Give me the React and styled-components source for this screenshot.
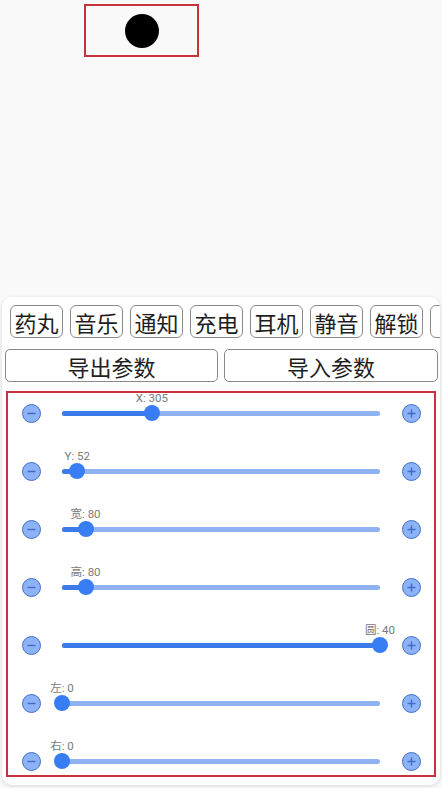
import React from "react";
import styled, { createGlobalStyle } from "styled-components";

const GlobalStyle = createGlobalStyle`
  html, body {
    margin: 0;
    padding: 0;
    background: #f9f9f9;
    font-family: "Noto Sans CJK SC", "Noto Sans", Roboto, sans-serif;
  }
`;

const Page = styled.div`
  height: 788px;
  display: flex;
  flex-direction: column;
  overflow: hidden;
`;

const Preview = styled.div`
  margin: 4px 0 0 84px;
  width: 115px;
  height: 53px;
  box-sizing: border-box;
  border: 2px solid #c8323c;
  display: flex;
  align-items: center;
  justify-content: center;
`;

const Dot = styled.div`
  width: 34px;
  height: 34px;
  border-radius: 50%;
  background: #000;
`;

const Card = styled.div`
  margin: auto 2px 3px 2px;
  height: 488px;
  box-sizing: border-box;
  background: #fff;
  border-radius: 10px;
  box-shadow: 0 1px 4px rgba(0, 0, 0, 0.14);
  padding: 8px 4px 8px 3px;
  display: flex;
  flex-direction: column;
  overflow: hidden;
`;

const ChipRow = styled.div`
  display: flex;
  gap: 7px;
  padding-left: 5px;
  margin-right: -4px;
  overflow: hidden;
`;

const Chip = styled.div`
  flex: 0 0 53px;
  height: 33px;
  box-sizing: border-box;
  border: 1px solid #8a8a8a;
  border-radius: 6px;
  display: flex;
  align-items: center;
  justify-content: center;
  font-size: 22px;
  color: #1e1e1e;
`;

const ActionRow = styled.div`
  display: grid;
  grid-template-columns: 213px 214px;
  gap: 6px;
  margin-top: 11px;
`;

const ActionButton = styled.div`
  height: 33px;
  box-sizing: border-box;
  border: 1px solid #8a8a8a;
  border-radius: 5px;
  display: flex;
  align-items: center;
  justify-content: center;
  font-size: 22px;
  color: #1e1e1e;
`;

const ParamBox = styled.div`
  margin: 9px 0 0 1px;
  width: 430px;
  height: 386px;
  box-sizing: border-box;
  border: 2px solid #c8323c;
  display: flex;
  flex-direction: column;
  gap: 18px;
  overflow: hidden;
`;

const ParamRow = styled.div`
  flex: 0 0 40px;
  display: grid;
  grid-template-columns: 19px 318px 19px;
  column-gap: 21.5px;
  align-items: center;
  padding-left: 13.5px;
`;

const RoundBtn = styled.div`
  width: 19px;
  height: 19px;
  box-sizing: border-box;
  border-radius: 50%;
  background: #8cb2f7;
  border: 1px solid #4270c8;
  display: flex;
  align-items: center;
  justify-content: center;
`;

const Slider = styled.div`
  position: relative;
  height: 20px;
`;

const Track = styled.div`
  position: absolute;
  left: 0;
  right: 0;
  top: 8px;
  height: 5px;
  border-radius: 3px;
  background: #8fb3f2;
`;

const Fill = styled.div`
  position: absolute;
  left: 0;
  top: 8px;
  height: 5px;
  border-radius: 3px;
  background: #3b7be9;
`;

const Thumb = styled.div`
  position: absolute;
  top: 2px;
  width: 16px;
  height: 16px;
  margin-left: -8px;
  border-radius: 50%;
  background: #397df4;
`;

const ValueLabel = styled.div`
  position: absolute;
  top: -11px;
  transform: translateX(-50%);
  font-family: Roboto, "Noto Sans CJK SC", sans-serif;
  font-size: 11.5px;
  line-height: 12px;
  color: #7a7a7a;
  white-space: nowrap;
`;

const Sign = ({ plus }) => (
  <svg width="11" height="11" viewBox="0 0 11 11">
    <line x1="1.5" y1="5.5" x2="9.5" y2="5.5" stroke="#3f6cc4" strokeWidth="1.4" />
    {plus && <line x1="5.5" y1="1.5" x2="5.5" y2="9.5" stroke="#3f6cc4" strokeWidth="1.4" />}
  </svg>
);

// the last chip is scrolled off the right edge, only its border shows
const chips = ["药丸", "音乐", "通知", "充电", "耳机", "静音", "解锁", ""];

const params = [
  { name: "X", value: 305, max: 1080 },
  { name: "Y", value: 52, max: 1080 },
  { name: "宽", value: 80, max: 1080 },
  { name: "高", value: 80, max: 1080 },
  { name: "圆", value: 40, max: 40 },
  { name: "左", value: 0, max: 100 },
  { name: "右", value: 0, max: 100 },
];

const ParamSlider = ({ name, value, max }) => {
  const pos = (value / max) * 318;
  return (
    <Slider>
      <Track />
      <Fill style={{ width: pos }} />
      <Thumb style={{ left: pos }} />
      <ValueLabel style={{ left: pos }}>
        {name}: {value}
      </ValueLabel>
    </Slider>
  );
};

const App = () => {
  return (
    <Page>
      <GlobalStyle />
      <Preview>
        <Dot />
      </Preview>
      <Card>
        <ChipRow>
          {chips.map((c, i) => (
            <Chip key={i}>{c}</Chip>
          ))}
        </ChipRow>
        <ActionRow>
          <ActionButton>导出参数</ActionButton>
          <ActionButton>导入参数</ActionButton>
        </ActionRow>
        <ParamBox>
          {params.map((p) => (
            <ParamRow key={p.name}>
              <RoundBtn>
                <Sign />
              </RoundBtn>
              <ParamSlider {...p} />
              <RoundBtn>
                <Sign plus />
              </RoundBtn>
            </ParamRow>
          ))}
        </ParamBox>
      </Card>
    </Page>
  );
};

export default App;
